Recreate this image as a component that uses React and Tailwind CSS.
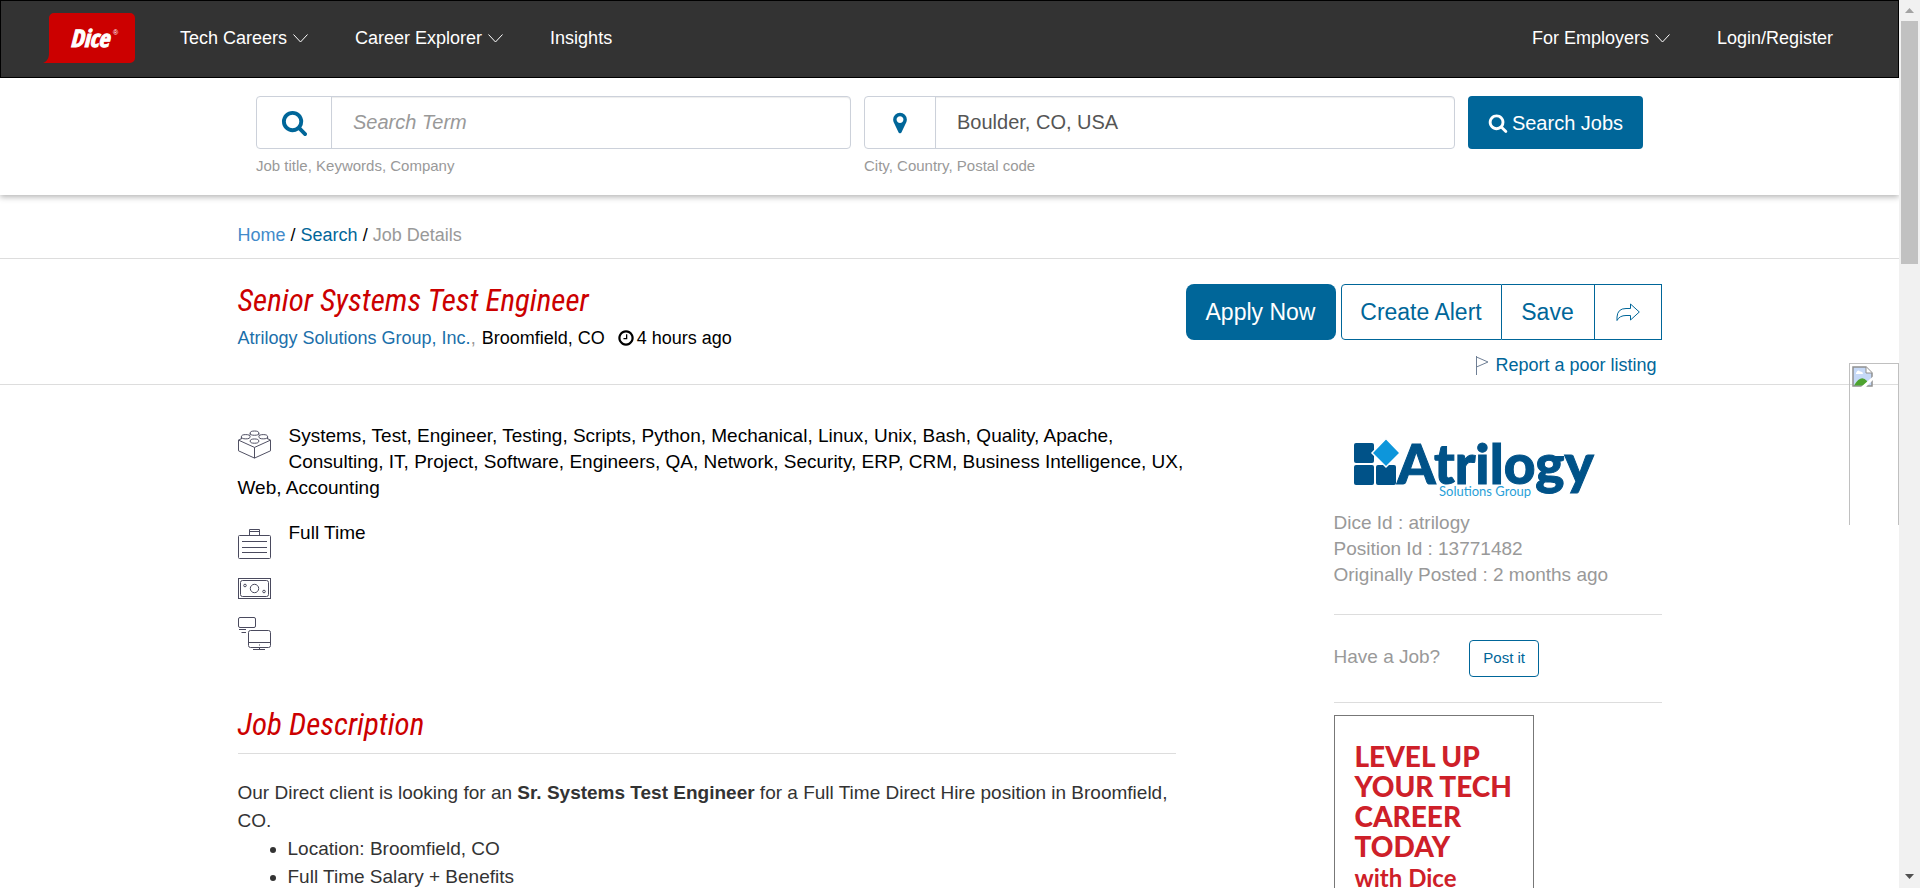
const SKILLS =
  "Systems, Test, Engineer, Testing, Scripts, Python, Mechanical, Linux, Unix, Bash, Quality, Apache, Consulting, IT, Project, Software, Engineers, QA, Network, Security, ERP, CRM, Business Intelligence, UX, Web, Accounting";

const SOLID_PATHS = {
  search:
    "M1216 832q0-185-131.5-316.5t-316.5-131.5-316.5 131.5-131.5 316.5 131.5 316.5 316.5 131.5 316.5-131.5 131.5-316.5zm512 832q0 52-38 90t-90 38q-54 0-90-38l-343-342q-179 124-399 124-143 0-273.5-55.5t-225-150-150-225-55.5-273.5 55.5-273.5 150-225 225-150 273.5-55.5 273.5 55.5 225 150 150 225 55.5 273.5q0 220-124 399l343 343q37 37 37 90z",
  marker:
    "M1152 640q0-106-75-181t-181-75-181 75-75 181 75 181 181 75 181-75 75-181zm256 0q0 109-33 179l-364 774q-16 33-47.5 52t-67.5 19-67.5-19-46.5-52l-365-774q-33-70-33-179 0-212 150-362t362-150 362 150 150 362z",
  clock:
    "M1024 544v448q0 14-9 23t-23 9h-320q-14 0-23-9t-9-23v-64q0-14 9-23t23-9h224v-352q0-14 9-23t23-9h64q14 0 23 9t9 23zm416 352q0-148-73-273t-198-198-273-73-273 73-198 198-73 273 73 273 198 198 273 73 273-73 198-198 73-273zm224 0q0 209-103 385.5t-279.5 279.5-385.5 103-385.5-103-279.5-279.5-103-385.5 103-385.5 279.5-279.5 385.5-103 385.5 103 279.5 279.5 103 385.5z",
};

function SolidIcon({ name, className }) {
  return (
    <svg viewBox="0 0 1792 1792" fill="currentColor" className={className} aria-hidden="true">
      <path d={SOLID_PATHS[name]} />
    </svg>
  );
}

function Chevron() {
  return (
    <svg width="15" height="9" viewBox="0 0 15 9" fill="none" stroke="currentColor" aria-hidden="true">
      <path d="M0.5 0.5 7.5 8 14.5 0.5" />
    </svg>
  );
}

function NavItem({ label, menu }) {
  return (
    <a href="#" className="flex items-center gap-[6px]">
      {label}
      {menu && <Chevron />}
    </a>
  );
}

function DiceLogo() {
  return (
    <svg width="92" height="50" viewBox="0 0 92 50" role="img" aria-label="Dice">
      <path
        d="M11 0H87a5 5 0 0 1 5 5V45a5 5 0 0 1-5 5H0C5 48 6 44 6 40V5a5 5 0 0 1 5-5z"
        fill="#c00"
      />
      <text
        x="27"
        y="34"
        fill="#fff"
        stroke="#fff"
        strokeWidth="1"
        fontFamily="'Open Sans Condensed', 'Liberation Sans', sans-serif"
        fontSize="24"
        fontWeight="800"
        fontStyle="italic"
      >
        Dice
      </text>
      <text x="70" y="22" fill="#fff" fontFamily="'Liberation Sans', sans-serif" fontSize="7">
        ®
      </text>
    </svg>
  );
}

function Header() {
  return (
    <header className="flex h-[78px] items-center border border-black bg-[#333] pr-[65px] pb-[2px] pl-[42px] text-[18px] text-white">
      <a href="#">
        <DiceLogo />
      </a>
      <nav className="ml-[45px] flex flex-1 items-center gap-[47px]">
        <NavItem label="Tech Careers" menu />
        <NavItem label="Career Explorer" menu />
        <NavItem label="Insights" />
      </nav>
      <nav className="flex items-center gap-[47px]">
        <NavItem label="For Employers" menu />
        <NavItem label="Login/Register" />
      </nav>
    </header>
  );
}

function SearchField({ id, icon, iconCell, iconSize, hint, ...input }) {
  return (
    <div>
      <div className="flex h-[53px] rounded border border-[#ccd1da]">
        <label
          htmlFor={id}
          aria-label={hint}
          className={`flex shrink-0 items-center justify-center border-r border-[#ccd1da] text-[#069] ${iconCell}`}
        >
          <SolidIcon name={icon} className={iconSize} />
        </label>
        <input
          id={id}
          className="min-w-0 flex-1 rounded-r px-[21px] pb-[2px] text-[20px] text-[#555] shadow-[inset_0_1px_1px_rgba(0,0,0,0.075)] placeholder:text-[#999] placeholder:italic"
          {...input}
        />
      </div>
      <p className="pt-[7px] text-[15px] leading-[20px] text-[#999]">{hint}</p>
    </div>
  );
}

function SearchBar() {
  return (
    <form className="relative h-[117px] px-10 pt-[18px] shadow-[0_2px_6px_rgba(0,0,0,0.3)]">
      <div className="mx-auto grid max-w-[1387px] grid-cols-[595fr_591fr_175px] items-start gap-[13px]">
        <SearchField
          id="term"
          icon="search"
          iconCell="w-[75px]"
          iconSize="size-[27px]"
          hint="Job title, Keywords, Company"
          placeholder="Search Term"
        />
        <SearchField
          id="place"
          icon="marker"
          iconCell="w-[71px]"
          iconSize="size-[24px]"
          hint="City, Country, Postal code"
          defaultValue="Boulder, CO, USA"
        />
        <button
          type="button"
          className="flex h-[53px] items-center justify-center gap-[4px] rounded bg-[#069] text-[20px] text-white"
        >
          <SolidIcon name="search" className="size-[20px]" />
          Search Jobs
        </button>
      </div>
    </form>
  );
}

function Container({ className, children }) {
  return <div className={`mx-auto max-w-[1424px] ${className}`}>{children}</div>;
}

function TitleBar() {
  return (
    <section className="border-b border-[#ddd]">
      <Container className="flex h-[125px] justify-between">
        <div className="pt-[22px]">
          <h1 className="font-['Roboto_Condensed',Roboto,sans-serif] text-[31px] leading-[40px] font-normal text-[#c00] italic">
            Senior Systems Test Engineer
          </h1>
          <div className="flex items-center pt-[4px] text-[18px] leading-[26px]">
            <a href="#" className="text-[#1b6faa]">
              Atrilogy Solutions Group, Inc.
            </a>
            <span className="text-[#999]">,</span>
            <span className="pl-[6px]">Broomfield, CO</span>
            <SolidIcon name="clock" className="mr-[2px] ml-[12px] size-[18px]" />
            <span>4 hours ago</span>
          </div>
        </div>
        <div className="pt-[25px]">
          <div className="flex h-[56px] text-[23px] text-[#069]">
            <button type="button" className="mr-[5px] w-[150px] rounded-lg bg-[#069] text-white">
              Apply Now
            </button>
            <button type="button" className="w-[161px] rounded-l border border-[#069]">
              Create Alert
            </button>
            <button type="button" className="w-[92px] border-y border-[#069]">
              Save
            </button>
            <button
              type="button"
              aria-label="Share"
              className="flex w-[68px] items-center justify-center border border-[#069]"
            >
              <svg width="24" height="19" viewBox="0 0 24 19" fill="none" stroke="currentColor" aria-hidden="true">
                <path d="M1 17.5V14Q1.500 5.500 10 5.500H14.500V1L23.300 9 14.500 17V12.500H10Q3.500 12.500 1 17.500z" />
              </svg>
            </button>
          </div>
          <a
            href="#"
            className="flex items-center justify-end gap-[6px] pt-[12px] pr-[5px] text-[18px] leading-[26px] text-[#069]"
          >
            <svg width="13" height="19" viewBox="0 0 13 19" fill="none" stroke="#6f7f95" aria-hidden="true">
              <path d="M0.500 0V19M0.500 1 12 6 0.500 11" />
            </svg>
            Report a poor listing
          </a>
        </div>
      </Container>
    </section>
  );
}

function BrickIcon() {
  return (
    <svg width="33" height="29" viewBox="0 0 34 29" fill="none" stroke="#4a4a5e" aria-hidden="true">
      <path d="M3.500 8.500 0.500 10V21L17 28.500 33.500 21V10L30.500 8.500M0.500 10 17 17.500 33.500 10M17 17.500V28.500" />
      <path d="M12.500 3V5M21.500 3V5M3.500 6.500V9M30.500 6.500V9" />
      <ellipse cx="17" cy="2.800" rx="4.500" ry="2.200" />
      <ellipse cx="8" cy="6.500" rx="4.500" ry="2.200" />
      <ellipse cx="26" cy="6.500" rx="4.500" ry="2.200" />
      <ellipse cx="17" cy="11" rx="4.500" ry="2.200" />
    </svg>
  );
}

function BriefcaseIcon() {
  return (
    <svg width="33" height="30" viewBox="0 0 33 30" fill="none" stroke="#4a4a5e" aria-hidden="true">
      <rect x="0.500" y="6.500" width="32" height="23" rx="1" />
      <path d="M11.500 6.500V0.500H21.500V6.500M11.500 2.500H21.500M4 12.500H29M4 18.500H29M4 23.500H29" />
    </svg>
  );
}

function MoneyIcon() {
  return (
    <svg width="33" height="21" viewBox="0 0 33 21" fill="none" stroke="#4a4a5e" aria-hidden="true">
      <rect x="0.500" y="0.500" width="32" height="20" />
      <rect x="2.500" y="2.500" width="28" height="16" rx="2" />
      <circle cx="16.500" cy="10.500" r="4.200" />
      <circle cx="7" cy="7.500" r="1.300" />
      <circle cx="26" cy="13.500" r="1.300" />
    </svg>
  );
}

function MonitorsIcon() {
  return (
    <svg width="33" height="33" viewBox="0 0 33 33" fill="none" stroke="#4a4a5e" aria-hidden="true">
      <rect x="0.500" y="0.500" width="17" height="10" rx="1.500" />
      <path d="M1 12.500H8M3.500 15.500H8" />
      <rect x="10.500" y="13.500" width="22" height="17" rx="2" />
      <path d="M10.500 25.500H32.500M15 32.500H27M21.500 30.500V32.500M21 28H22" />
    </svg>
  );
}

function AtrilogyLogo() {
  return (
    <svg
      width="250"
      height="68"
      viewBox="0 0 250 68"
      className="overflow-visible"
      role="img"
      aria-label="Atrilogy Solutions Group"
    >
      <g fill="#005288">
        <rect x="4" y="9" width="20" height="20" rx="2" />
        <rect x="4" y="31" width="20" height="20" rx="2" />
        <rect x="26" y="31" width="20" height="20" rx="2" />
      </g>
      <path d="M36 4.500 50 19 36 33 22 19z" fill="#0d96db" stroke="#fff" strokeWidth="1.500" />
      <text
        x="47"
        y="50"
        fill="#005288"
        stroke="#005288"
        fontFamily="Lato, sans-serif"
        fontSize="55"
        fontWeight="900"
      >
        Atrilogy
      </text>
      <text x="89" y="62" fill="#2a9fd8" fontFamily="Lato, sans-serif" fontSize="13">
        Solutions Group
      </text>
    </svg>
  );
}

function Sidebar() {
  return (
    <aside className="w-[328px] shrink-0 pt-[49px] text-[19px] leading-[26px] text-[#999]">
      <div className="pl-[16px]">
        <AtrilogyLogo />
      </div>
      <div className="border-b border-[#ddd] pt-[8px] pb-[26px]">
        <p>Dice Id : atrilogy</p>
        <p>Position Id : 13771482</p>
        <p>Originally Posted : 2 months ago</p>
      </div>
      <div className="flex border-b border-[#ddd] pt-[25px] pb-[25px]">
        <p className="pt-[4px]">Have a Job?</p>
        <button
          type="button"
          className="ml-[29px] h-[37px] w-[70px] rounded border border-[#069] pb-[2px] text-[15px] text-[#069]"
        >
          Post it
        </button>
      </div>
      <a
        href="#"
        className="mt-[12px] block h-[400px] w-[200px] border border-[#777] pt-[25px] pl-[20px] font-['Lato',sans-serif] text-[28px] leading-[30px] font-black text-[#ce2029]"
      >
        LEVEL UP
        <br />
        YOUR TECH
        <br />
        CAREER
        <br />
        TODAY
        <br />
        <span className="text-[24px] font-bold">with Dice</span>
      </a>
    </aside>
  );
}

function Details() {
  return (
    <Container className="flex justify-between">
      <article className="w-[938px] pt-[38px] text-[19px]">
        <div className="-mr-[16px] leading-[26px]">
          <div className="float-left w-[51px] pt-[7px]">
            <BrickIcon />
          </div>
          {SKILLS}
        </div>
        <div className="flex pt-[19px] leading-[26px]">
          <div className="w-[51px] pt-[9px]">
            <BriefcaseIcon />
          </div>
          Full Time
        </div>
        <div className="pt-[19px]">
          <MoneyIcon />
        </div>
        <div className="pt-[18px]">
          <MonitorsIcon />
        </div>
        <h2 className="mt-[55px] border-b border-[#ddd] pb-[8px] font-['Roboto_Condensed',Roboto,sans-serif] text-[31px] leading-[40px] font-normal text-[#c00] italic">
          Job Description
        </h2>
        <div className="pt-[25px] leading-[28px] text-[#333]">
          <p>
            Our Direct client is looking for an <b>Sr. Systems Test Engineer</b> for a Full Time Direct Hire position in
            Broomfield, CO.
          </p>
          <ul className="list-disc pl-[50px]">
            <li>Location: Broomfield, CO</li>
            <li>Full Time Salary + Benefits</li>
          </ul>
        </div>
      </article>
      <Sidebar />
    </Container>
  );
}

function SideTab() {
  return (
    <div className="absolute top-[363px] right-0 h-[162px] w-[50px] border border-b-0 border-[#c0c0c0] pt-[2px] pl-[2px]">
      <svg width="21" height="21" viewBox="0 0 21 21" role="img" aria-label="Missing image">
        <path d="M1 1H14L20 7V20H1z" fill="#c6d9f7" stroke="#909090" strokeWidth="1.500" />
        <path d="M2 19.500Q9 8 15 15L16 19.500z" fill="#4da32f" />
        <path d="M4 7Q6 3 8 5.500 11 5 11 8H4z" fill="#fff" />
        <path d="M14 1V7H20" fill="#fff" stroke="#909090" />
        <path d="M9 21 21 10.500V14L14 21z" fill="#fff" />
      </svg>
    </div>
  );
}

function ScrollRail() {
  return (
    <div className="flex w-[21px] shrink-0 flex-col items-center bg-[#f1f1f1]" aria-hidden="true">
      <div className="flex h-[21px] items-center">
        <svg width="9" height="5" viewBox="0 0 9 5">
          <path d="M4.500 0 9 5H0z" fill="#a3a3a3" />
        </svg>
      </div>
      <div className="h-[243px] w-[17px] bg-[#c1c1c1]" />
      <div className="mt-auto flex h-[23px] items-center">
        <svg width="9" height="5" viewBox="0 0 9 5">
          <path d="M4.500 5 9 0H0z" fill="#505050" />
        </svg>
      </div>
    </div>
  );
}

export default function App() {
  return (
    <div className="flex h-screen overflow-hidden bg-white font-['Liberation_Sans',Arial,sans-serif] text-black">
      <div className="relative min-w-0 flex-1 overflow-hidden">
        <Header />
        <SearchBar />
        <nav aria-label="Breadcrumb" className="border-b border-[#ddd]">
          <Container className="h-[63px] pt-[27px] text-[18px] leading-[26px]">
            <a href="#" className="text-[#428bca]">
              Home
            </a>{" "}
            /{" "}
            <a href="#" className="text-[#069]">
              Search
            </a>{" "}
            / <span className="text-[#999]">Job Details</span>
          </Container>
        </nav>
        <TitleBar />
        <Details />
        <SideTab />
      </div>
      <ScrollRail />
    </div>
  );
}
